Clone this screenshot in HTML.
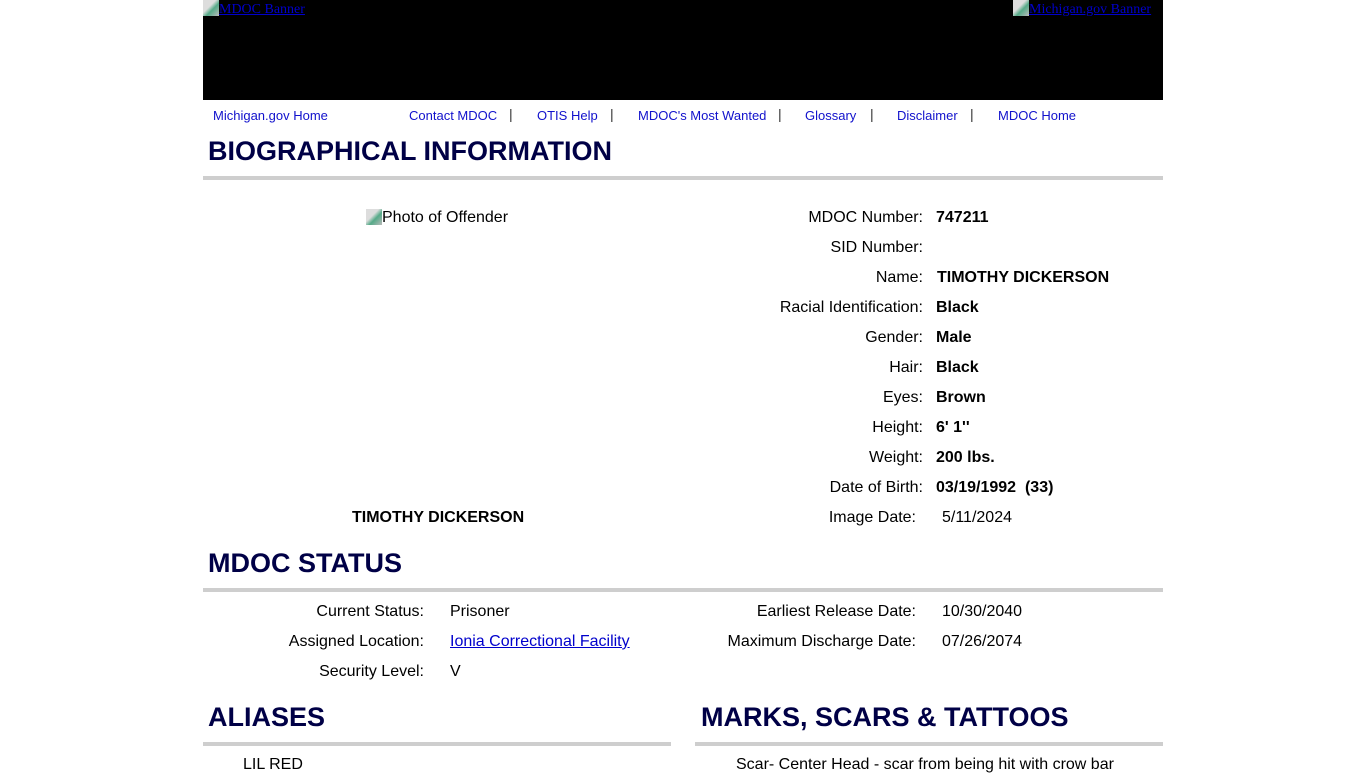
<!DOCTYPE html>
<html><head><meta charset="utf-8"><style>
body{margin:0;background:#fff;font-family:"Liberation Sans",Arial,sans-serif;width:1366px;height:768px;overflow:hidden;position:relative}
.a{position:absolute;white-space:nowrap}
.ban{position:absolute;left:203px;top:0;width:960px;height:100px;background:#000}
.ico{display:inline-block;width:16px;height:16px;background:linear-gradient(135deg,#ddd 40%,#5a8 60%,#bbb);vertical-align:-3px}
.nav{font-size:13px;color:#11c;top:108px}
.bar{font-size:14px;color:#333;top:106px}
h2{position:absolute;margin:0;font-size:27px;font-weight:bold;color:#000046;white-space:nowrap;letter-spacing:0}
.hr{position:absolute;height:4px;background:#cecece}
.l{position:absolute;font-size:16px;color:#000;text-align:right;white-space:nowrap}
.v{position:absolute;font-size:16px;color:#000;font-weight:bold;white-space:nowrap}
.n{position:absolute;font-size:16px;color:#000;white-space:nowrap}
</style></head><body>
<div class="ban"></div>
<div class="a" style="left:203px;top:0"><span class="ico"></span><span style="color:#00c;font-family:'Liberation Serif',serif;font-size:14px;text-decoration:underline">MDOC Banner</span></div>
<div class="a" style="left:1013px;top:0"><span class="ico"></span><span style="color:#00c;font-family:'Liberation Serif',serif;font-size:14px;text-decoration:underline">Michigan.gov Banner</span></div>

<div class="a nav" style="left:213px">Michigan.gov Home</div>
<div class="a nav" style="left:409px">Contact MDOC</div>
<div class="a bar" style="left:509px">|</div>
<div class="a nav" style="left:537px">OTIS Help</div>
<div class="a bar" style="left:610px">|</div>
<div class="a nav" style="left:638px">MDOC's Most Wanted</div>
<div class="a bar" style="left:778px">|</div>
<div class="a nav" style="left:805px">Glossary</div>
<div class="a bar" style="left:870px">|</div>
<div class="a nav" style="left:897px">Disclaimer</div>
<div class="a bar" style="left:970px">|</div>
<div class="a nav" style="left:998px">MDOC Home</div>

<h2 style="left:208px;top:136px">BIOGRAPHICAL INFORMATION</h2>
<div class="hr" style="left:203px;top:176px;width:960px"></div>

<div class="a" style="left:366px;top:209px;font-size:16px"><span class="ico"></span>Photo of Offender</div>
<div class="v" style="left:352px;top:509px">TIMOTHY DICKERSON</div>

<div class="l" style="right:443px;top:209px">MDOC Number:</div><div class="v" style="left:936px;top:209px">747211</div>
<div class="l" style="right:443px;top:239px">SID Number:</div>
<div class="l" style="right:443px;top:269px">Name:</div><div class="v" style="left:937px;top:269px">TIMOTHY DICKERSON</div>
<div class="l" style="right:443px;top:299px">Racial Identification:</div><div class="v" style="left:936px;top:299px">Black</div>
<div class="l" style="right:443px;top:329px">Gender:</div><div class="v" style="left:936px;top:329px">Male</div>
<div class="l" style="right:443px;top:359px">Hair:</div><div class="v" style="left:936px;top:359px">Black</div>
<div class="l" style="right:443px;top:389px">Eyes:</div><div class="v" style="left:936px;top:389px">Brown</div>
<div class="l" style="right:443px;top:419px">Height:</div><div class="v" style="left:936px;top:419px">6' 1''</div>
<div class="l" style="right:443px;top:449px">Weight:</div><div class="v" style="left:936px;top:449px">200 lbs.</div>
<div class="l" style="right:443px;top:479px">Date of Birth:</div><div class="v" style="left:936px;top:479px">03/19/1992&nbsp; (33)</div>
<div class="l" style="right:450px;top:509px">Image Date:</div><div class="n" style="left:942px;top:509px">5/11/2024</div>

<h2 style="left:208px;top:548px">MDOC STATUS</h2>
<div class="hr" style="left:203px;top:588px;width:960px"></div>
<div class="l" style="right:942px;top:603px">Current Status:</div><div class="n" style="left:450px;top:603px">Prisoner</div>
<div class="l" style="right:942px;top:633px">Assigned Location:</div><div class="n" style="left:450px;top:633px;color:#00c;text-decoration:underline">Ionia Correctional Facility</div>
<div class="l" style="right:942px;top:663px">Security Level:</div><div class="n" style="left:450px;top:663px">V</div>
<div class="l" style="right:450px;top:603px">Earliest Release Date:</div><div class="n" style="left:942px;top:603px">10/30/2040</div>
<div class="l" style="right:450px;top:633px">Maximum Discharge Date:</div><div class="n" style="left:942px;top:633px">07/26/2074</div>

<h2 style="left:208px;top:702px">ALIASES</h2>
<div class="hr" style="left:203px;top:742px;width:468px"></div>
<h2 style="left:701px;top:702px">MARKS, SCARS &amp; TATTOOS</h2>
<div class="hr" style="left:695px;top:742px;width:468px"></div>
<div class="n" style="left:243px;top:756px">LIL RED</div>
<div class="n" style="left:736px;top:756px">Scar- Center Head - scar from being hit with crow bar</div>
</body></html>
